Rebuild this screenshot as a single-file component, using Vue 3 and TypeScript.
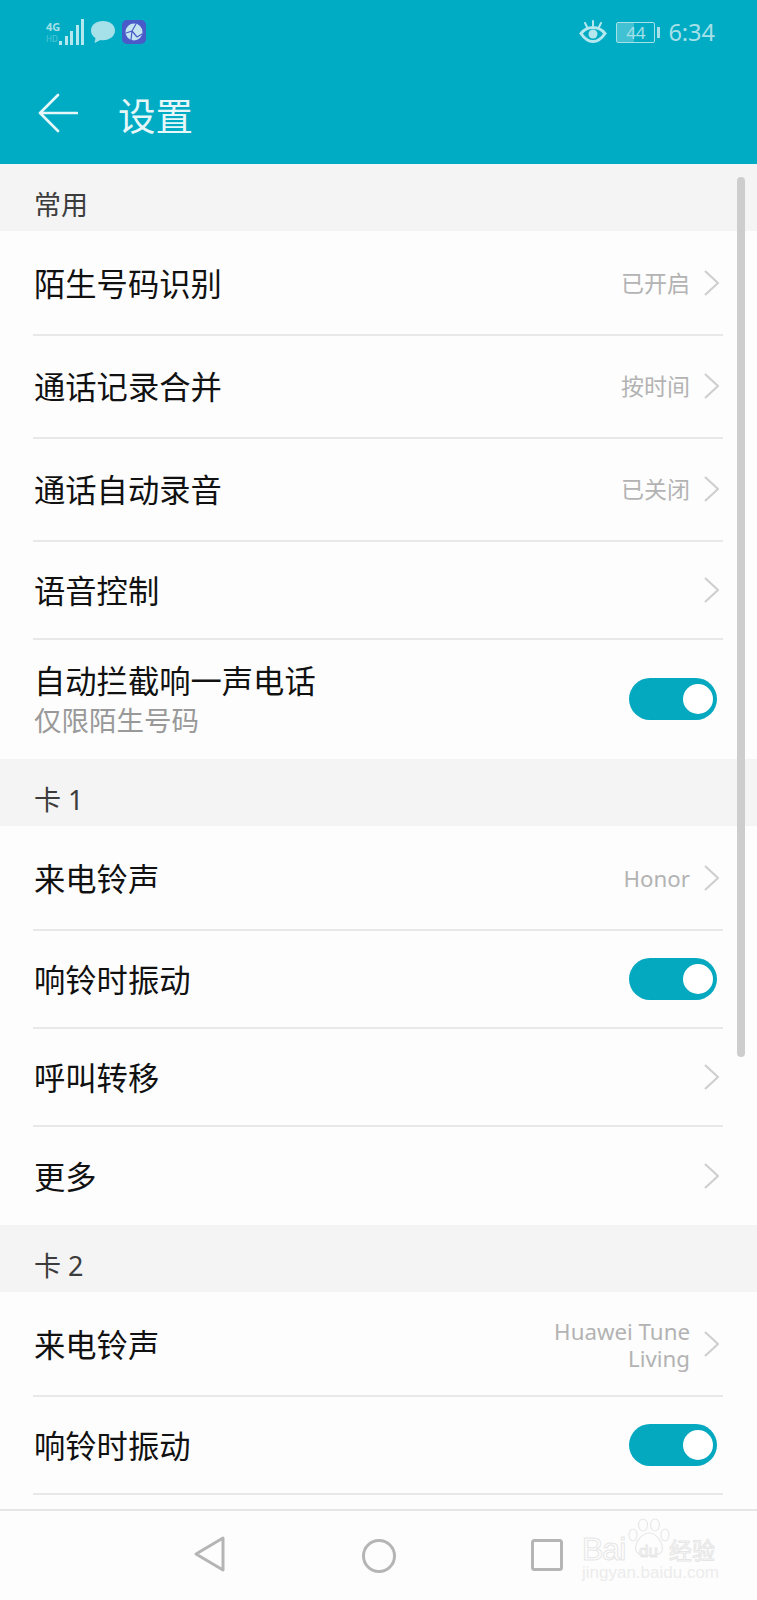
<script setup lang="ts">
type Row = {
  title: string
  sub?: string
  value?: string[]
  latin?: boolean
  toggle?: boolean
  short?: boolean
}

type Section = { name: string; rows: Row[] }

const sections: Section[] = [
  {
    name: '常用',
    rows: [
      { title: '陌生号码识别', value: ['已开启'] },
      { title: '通话记录合并', value: ['按时间'] },
      { title: '通话自动录音', value: ['已关闭'] },
      { title: '语音控制', short: true },
      { title: '自动拦截响一声电话', sub: '仅限陌生号码', toggle: true },
    ],
  },
  {
    name: '卡 1',
    rows: [
      { title: '来电铃声', value: ['Honor'], latin: true },
      { title: '响铃时振动', toggle: true, short: true },
      { title: '呼叫转移', short: true },
      { title: '更多', short: true },
    ],
  },
  {
    name: '卡 2',
    rows: [
      { title: '来电铃声', value: ['Huawei Tune', 'Living'], latin: true },
      { title: '响铃时振动', toggle: true, short: true },
    ],
  },
]

const signalBars = [4, 9, 14, 20, 26]
</script>

<template>
  <div class="phone">
    <header class="header">
      <div class="status">
        <div class="status__left">
          <div class="net">
            <span class="net__type">4G</span>
            <span class="net__hd">HD</span>
          </div>
          <div class="bars">
            <i v-for="h in signalBars" :key="h" class="bars__bar" :style="{ height: h + 'px' }"></i>
          </div>
          <svg class="bubble" width="26" height="24" viewBox="0 0 26 24">
            <path d="M13 1C6 1 1 5 1 10.500C1 14 3 16.500 5.500 18L4.500 23L10.500 20C11.500 20.200 12 20.200 13 20.200C20 20.200 25 16 25 10.500C25 5 20 1 13 1Z" fill="#a6e0e8" />
          </svg>
          <svg class="app-icon" width="24" height="24" viewBox="0 0 24 24">
            <rect width="24" height="24" rx="5" fill="#4a5bc9" />
            <circle cx="12" cy="12" r="8.500" fill="#c4e4f0" />
            <path d="M4 13L10 11L14 4M10 11L15 17M10 11L9 20M15 17L20 14" fill="none" stroke="#4a5bc9" stroke-width="1.200" />
          </svg>
        </div>
        <div class="status__right">
          <svg class="eye" width="28" height="24" viewBox="0 0 28 24">
            <path d="M2 13.500C6 8.500 10 7.500 14 7.500C18 7.500 22 8.500 26 13.500C22 19.500 18 21.500 14 21.500C10 21.500 6 19.500 2 13.500Z" fill="none" stroke="#b5e7ee" stroke-width="3" />
            <circle cx="14" cy="14" r="4.500" fill="#b5e7ee" />
            <path d="M6 3L8.500 8M14 1V6M22 3L19.500 8" stroke="#b5e7ee" stroke-width="2" stroke-linecap="round" />
          </svg>
          <div class="battery">
            <div class="battery__body">
              <div class="battery__fill"></div>
              <span class="battery__num">44</span>
            </div>
            <div class="battery__tip"></div>
          </div>
          <span class="clock">6:34</span>
        </div>
      </div>
      <div class="toolbar">
        <svg class="back" width="40" height="40" viewBox="0 0 40 40">
          <path d="M20 2L2 20L20 38M2 20H39" fill="none" stroke="#e6f7fa" stroke-width="2.600" stroke-linecap="round" stroke-linejoin="round" />
        </svg>
        <h1 class="toolbar__title">设置</h1>
      </div>
    </header>

    <main class="list">
      <section v-for="section in sections" :key="section.name">
        <div class="section-name">{{ section.name }}</div>
        <div
          v-for="(row, i) in section.rows"
          :key="row.title"
          class="row"
          :class="{
            'row--first': i === 0,
            'row--short': row.short,
            'row--sub': row.sub,
            'row--last': i === section.rows.length - 1 && section.name !== '卡 2',
          }"
        >
          <div class="row__text">
            <div class="row__title">{{ row.title }}</div>
            <div v-if="row.sub" class="row__sub">{{ row.sub }}</div>
          </div>
          <div v-if="row.value" class="row__value" :class="{ 'row__value--latin': row.latin }">
            <div v-for="line in row.value" :key="line">{{ line }}</div>
          </div>
          <div v-if="row.toggle" class="toggle"><div class="toggle__knob"></div></div>
          <svg v-else class="chevron" width="15" height="26" viewBox="0 0 15 26">
            <path d="M1 1L14 13L1 25" fill="none" stroke="#cfcfcf" stroke-width="2.200" />
          </svg>
        </div>
      </section>
      <div class="scrollbar"></div>
    </main>

    <nav class="nav">
      <svg width="34" height="38" viewBox="0 0 34 38" class="nav__back">
        <path d="M31 3L4 19L31 35Z" fill="none" stroke="#b5b5b5" stroke-width="3" stroke-linejoin="round" />
      </svg>
      <svg width="36" height="36" viewBox="0 0 36 36" class="nav__home">
        <circle cx="18" cy="18" r="15.500" fill="none" stroke="#b5b5b5" stroke-width="3" />
      </svg>
      <svg width="32" height="32" viewBox="0 0 32 32" class="nav__recent">
        <rect x="1.500" y="1.500" width="29" height="29" rx="2" fill="none" stroke="#b5b5b5" stroke-width="3" />
      </svg>
      <div class="mark">
        <svg class="mark__paw" width="42" height="40" viewBox="0 0 42 40">
          <g fill="none" stroke="#e8e8e8" stroke-width="1.200">
            <ellipse cx="15" cy="7" rx="4.500" ry="6" />
            <ellipse cx="27" cy="7" rx="4.500" ry="6" />
            <ellipse cx="5" cy="17" rx="4" ry="6" />
            <ellipse cx="37" cy="17" rx="4" ry="6" />
            <path d="M21 15C13 15 6 26 8 33C10 39 32 39 34 33C36 26 29 15 21 15Z" />
          </g>
        </svg>
        <div class="mark__logo">
          <span class="mark__bai">Bai</span>
          <span class="mark__du">du</span>
          <span class="mark__jy">经验</span>
        </div>
        <div class="mark__url">jingyan.baidu.com</div>
      </div>
    </nav>
  </div>
</template>

<style>
body {
  margin: 0;
}
</style>

<style scoped>
.phone {
  width: 757px;
  height: 1600px;
  display: flex;
  flex-direction: column;
  overflow: hidden;
  background: #fdfdfd;
  font-family: "Noto Sans", "Noto Sans CJK SC", sans-serif;
}

.header {
  height: 164px;
  background: #00acc4;
  flex-shrink: 0;
}

.status {
  height: 64px;
  display: flex;
  justify-content: space-between;
  align-items: center;
  padding: 0 42px 0 46px;
}

.status__left,
.status__right {
  display: flex;
  align-items: center;
}

.net {
  width: 13px;
  display: flex;
  flex-direction: column;
  line-height: 1;
  color: #a6e0e8;
}

.net__type {
  font-size: 11px;
  font-weight: 700;
}

.net__hd {
  font-size: 8px;
  margin-top: 3px;
  opacity: 0.5;
}

.bars {
  display: flex;
  align-items: flex-end;
  gap: 2.500px;
}

.bars__bar {
  width: 3px;
  background: #b5e7ee;
}

.bubble {
  margin-left: 6px;
}

.app-icon {
  margin-left: 6px;
}

.eye {
  margin-right: 9px;
}

.battery {
  display: flex;
  align-items: center;
  margin-right: 8px;
}

.battery__body {
  position: relative;
  width: 37px;
  height: 19px;
  border: 1px solid #a6e0e8;
  border-radius: 2px;
  overflow: hidden;
}

.battery__fill {
  width: 44%;
  height: 100%;
  background: rgba(166, 224, 232, 0.4);
}

.battery__num {
  position: absolute;
  inset: 0;
  text-align: center;
  font-size: 17px;
  line-height: 19px;
  color: #a6e0e8;
}

.battery__tip {
  width: 3px;
  height: 11px;
  margin-left: 2px;
  background: #a6e0e8;
}

.clock {
  font-size: 23.500px;
  color: #a6e0e8;
}

.toolbar {
  height: 100px;
  display: flex;
  align-items: center;
  padding: 0 0 2px 38px;
  box-sizing: border-box;
}

.toolbar__title {
  margin: 0 0 0 40px;
  font-size: 37.500px;
  font-weight: 400;
  color: #e6f7fa;
}

.list {
  position: relative;
  flex: 1;
  overflow: hidden;
  min-height: 0;
}

.section-name {
  height: 67px;
  padding: 12px 0 0 34px;
  box-sizing: border-box;
  display: flex;
  align-items: center;
  background: #f4f4f4;
  font-size: 27px;
  color: #3c3c3c;
}

.row {
  height: 103px;
  margin: 0 34px 0 33px;
  display: flex;
  align-items: center;
  box-sizing: border-box;
  border-bottom: 2px solid #e8e8e8;
}

.row--first {
  height: 105px;
  padding-top: 3px;
}

.row--short {
  height: 98px;
  padding-top: 2px;
}

.row--sub {
  height: 119px;
}

.row--last {
  height: 98px;
  border-bottom: none;
}

.row--sub.row--last {
  height: 119px;
}

.row__text {
  flex: 1;
  padding-left: 1px;
}

.row__title {
  font-size: 31.300px;
  line-height: 42px;
  color: #111;
}

.row__sub {
  font-size: 27.500px;
  line-height: 37px;
  color: #999;
}

.row__value {
  margin-right: 14px;
  font-size: 23px;
  line-height: 27.500px;
  color: #b3b3b3;
  text-align: right;
}

.row__value--latin {
  font-size: 22.300px;
}

.chevron {
  margin-right: 4px;
  margin-bottom: 2px;
}

.toggle {
  width: 88px;
  height: 42px;
  margin-right: 6px;
  margin-bottom: 2px;
  border-radius: 21px;
  background: #04a9bf;
  display: flex;
  align-items: center;
  justify-content: flex-end;
  padding-right: 4px;
  box-sizing: border-box;
}

.toggle__knob {
  width: 30px;
  height: 30px;
  border-radius: 50%;
  background: #fff;
}

.scrollbar {
  position: absolute;
  left: 737px;
  top: 13px;
  width: 8px;
  height: 880px;
  border-radius: 4px;
  background: #cdcdcd;
}

.nav {
  position: relative;
  flex-shrink: 0;
  height: 91px;
  box-sizing: border-box;
  border-top: 2px solid #e6e6e6;
  background: #fdfdfd;
}

.nav__back {
  position: absolute;
  left: 192px;
  top: 24px;
}

.nav__home {
  position: absolute;
  left: 361px;
  top: 27px;
}

.nav__recent {
  position: absolute;
  left: 531px;
  top: 28px;
}

.mark {
  position: absolute;
  left: 582px;
  top: 7px;
  width: 136px;
  height: 66px;
  color: #fff;
}

.mark__paw {
  position: absolute;
  left: 46px;
  top: 0;
}

.mark__logo {
  position: absolute;
  left: 0;
  top: 16px;
  width: 134px;
  height: 30px;
  display: flex;
  align-items: center;
  font-family: "Liberation Sans", "Noto Sans CJK SC", sans-serif;
  white-space: nowrap;
  -webkit-text-stroke: 1px #e6e6e6;
}

.mark__bai {
  width: 46px;
  font-size: 32px;
  letter-spacing: -1px;
}

.mark__du {
  width: 41px;
  padding-top: 6px;
  text-align: center;
  font-size: 17px;
  box-sizing: border-box;
}

.mark__jy {
  font-size: 23px;
}

.mark__url {
  position: absolute;
  left: 0;
  top: 45px;
  font-family: "Liberation Sans", sans-serif;
  font-size: 17px;
  line-height: 20px;
  color: #ececec;
  white-space: nowrap;
}
</style>
